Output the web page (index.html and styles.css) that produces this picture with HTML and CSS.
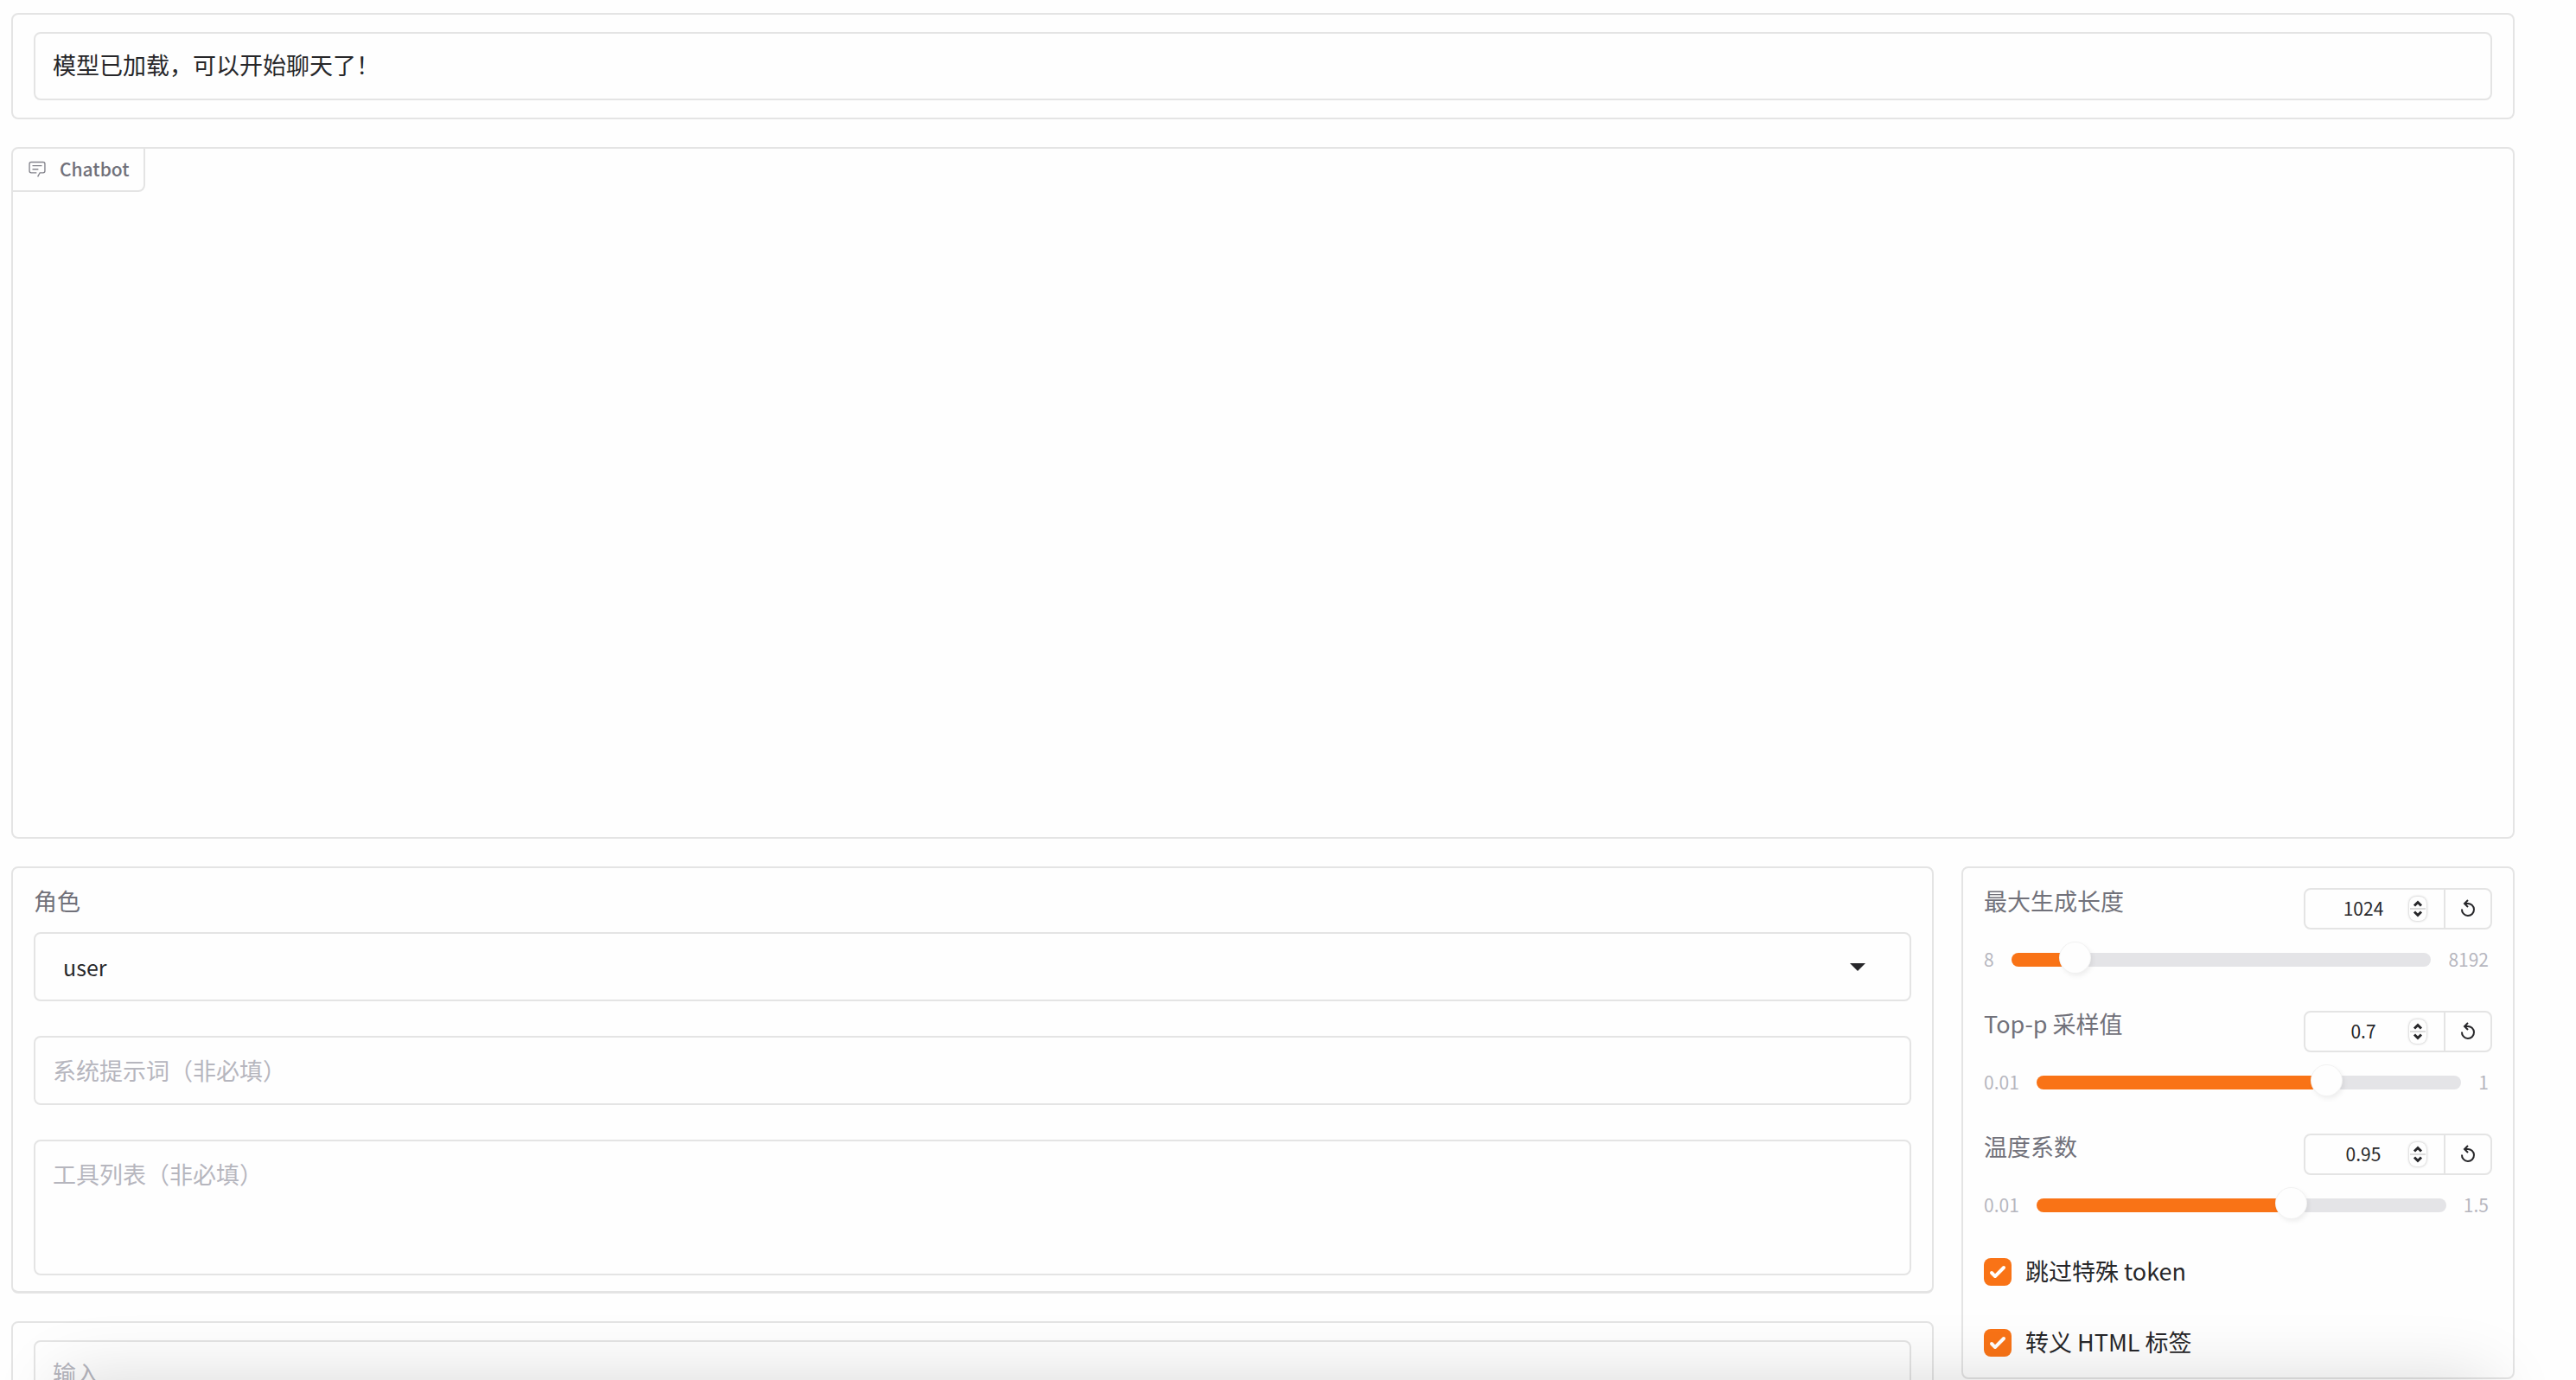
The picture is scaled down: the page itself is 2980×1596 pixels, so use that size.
FILE: index.html
```html
<!DOCTYPE html>
<html lang="zh-CN">

<head>
  <meta charset="UTF-8">
  <meta name="viewport" content="width=device-width, initial-scale=1.0">
  <title>Chatbot</title>
  <link rel="stylesheet" href="styles.css">
</head>

<body>
  <svg class="symbols" aria-hidden="true">
    <symbol id="icon-spinner" viewBox="0 0 20 28">
      <path class="split" d="M1 14h18" />
      <path d="M6 10.500 10 6.500l4 4M6 17.500l4 4 4-4" />
    </symbol>
    <symbol id="icon-reset" viewBox="0 0 18 22">
      <path d="M2 12.500A7 7 0 1 0 8.500 6H5" />
      <path d="M9 2 5 6l4 4" />
    </symbol>
  </svg>

  <main class="app">
    <section class="block">
      <input class="text-box" type="text" aria-label="状态" value="模型已加载，可以开始聊天了！" readonly>
    </section>

    <section class="block chatbot">
      <h2 class="block-label">
        <svg class="chat-icon" viewBox="0 0 32 32" aria-hidden="true">
          <path d="M17.74 30 16 29l4-7h6a2 2 0 0 0 2-2V8a2 2 0 0 0-2-2H6a2 2 0 0 0-2 2v12a2 2 0 0 0 2 2h9v2H6a4 4 0 0 1-4-4V8a4 4 0 0 1 4-4h20a4 4 0 0 1 4 4v12a4 4 0 0 1-4 4h-4.84Z" />
          <path d="M8 10h16v2H8zM8 16h10v2H8z" />
        </svg>
        Chatbot
      </h2>
    </section>

    <div class="row">
      <div class="main-column">
        <section class="block form">
          <div class="field">
            <label class="field-label" for="role">角色</label>
            <div class="select-wrap">
              <select id="role" class="text-box">
                <option>user</option>
                <option>observation</option>
              </select>
              <svg class="caret" viewBox="0 0 18 10" aria-hidden="true">
                <path d="M0 1h18L9 10z" />
              </svg>
            </div>
          </div>
          <input class="text-box" type="text" aria-label="系统提示词" placeholder="系统提示词（非必填）">
          <textarea class="text-box tools" aria-label="工具列表" placeholder="工具列表（非必填）"></textarea>
        </section>
        <section class="block">
          <textarea class="text-box" aria-label="输入" placeholder="输入"></textarea>
        </section>
      </div>

      <section class="block settings">
        <div class="slider">
          <div class="slider-head">
            <label class="field-label" for="max-length">最大生成长度</label>
            <div class="number-group">
              <input type="number" aria-label="最大生成长度数值" value="1024">
              <svg class="spinner" aria-hidden="true"><use href="#icon-spinner" /></svg>
              <button type="button" aria-label="重置"><svg aria-hidden="true"><use href="#icon-reset" /></svg></button>
            </div>
          </div>
          <div class="slider-body">
            <span>8</span>
            <input id="max-length" type="range" min="8" max="8192" value="1024" style="--fill: 12.4%">
            <span>8192</span>
          </div>
        </div>

        <div class="slider">
          <div class="slider-head">
            <label class="field-label" for="top-p">Top-p 采样值</label>
            <div class="number-group">
              <input type="number" aria-label="Top-p 采样值数值" step="0.01" value="0.7">
              <svg class="spinner" aria-hidden="true"><use href="#icon-spinner" /></svg>
              <button type="button" aria-label="重置"><svg aria-hidden="true"><use href="#icon-reset" /></svg></button>
            </div>
          </div>
          <div class="slider-body">
            <span>0.01</span>
            <input id="top-p" type="range" min="0.01" max="1" step="0.01" value="0.7" style="--fill: 69.7%">
            <span>1</span>
          </div>
        </div>

        <div class="slider">
          <div class="slider-head">
            <label class="field-label" for="temperature">温度系数</label>
            <div class="number-group">
              <input type="number" aria-label="温度系数数值" step="0.01" value="0.95">
              <svg class="spinner" aria-hidden="true"><use href="#icon-spinner" /></svg>
              <button type="button" aria-label="重置"><svg aria-hidden="true"><use href="#icon-reset" /></svg></button>
            </div>
          </div>
          <div class="slider-body">
            <span>0.01</span>
            <input id="temperature" type="range" min="0.01" max="1.5" step="0.01" value="0.95" style="--fill: 63.1%">
            <span>1.5</span>
          </div>
        </div>

        <label class="check"><input type="checkbox" checked><span>跳过特殊 token</span></label>
        <label class="check"><input type="checkbox" checked><span>转义 HTML 标签</span></label>
      </section>
    </div>
  </main>
  <div class="bottom-shade"></div>
</body>

</html>
```
FILE: styles.css
```css
* {
  box-sizing: border-box;
}

html,
body {
  height: 100%;
}

body {
  margin: 0;
  overflow: hidden;
  background: #fefefe;
  color: #27272a;
  font-family: "Noto Sans CJK SC", sans-serif;
  font-size: 27px;
  line-height: 40px;
}

input,
select,
textarea,
button {
  margin: 0;
  font: inherit;
  color: inherit;
}

.symbols {
  display: none;
}

.app {
  display: flex;
  flex-direction: column;
  gap: 32px;
  padding: 15px 71px 0 13px;
}

.block {
  border: 2px solid #e4e4e4;
  border-radius: 8px;
  padding: 20px 24px;
}

.text-box {
  display: block;
  width: 100%;
  height: 79px;
  padding: 16px 20px 20px;
  border: 2px solid #e4e4e4;
  border-radius: 8px;
  background: transparent;
  outline: none;
  resize: none;
}

.text-box::placeholder {
  color: #b6b6be;
}

/* chatbot */
.chatbot {
  height: 800px;
  padding: 0;
}

.block-label {
  display: flex;
  align-items: center;
  gap: 15px;
  width: fit-content;
  height: 50px;
  margin: 0;
  padding: 0 16px 2px 17px;
  border: solid #e4e4e4;
  border-width: 0 2px 2px 0;
  border-radius: 0 0 8px 0;
  color: #71717a;
  font-size: 21px;
  font-weight: 500;
}

.chat-icon {
  width: 22px;
  height: 22px;
  fill: #85858d;
}

/* form */
.row {
  display: flex;
  align-items: flex-start;
  gap: 32px;
}

.main-column {
  flex: 1;
  display: flex;
  flex-direction: column;
  gap: 32px;
}

.form {
  display: flex;
  flex-direction: column;
  gap: 40px;
  padding-top: 18px;
  padding-bottom: 18px;
  border-bottom-width: 3px;
}

.form .text-box {
  height: 80px;
  padding-top: 18px;
}

.form .tools {
  height: 157px;
}

.field-label {
  color: #71717a;
}

.field .field-label {
  display: block;
  margin-bottom: 16px;
}

.select-wrap {
  display: grid;
  align-items: center;
}

.select-wrap > * {
  grid-area: 1 / 1;
}

.select-wrap select {
  appearance: none;
  padding-left: 32px;
  font-size: 25px;
}

.caret {
  justify-self: end;
  width: 18px;
  height: 10px;
  margin-right: 53px;
  fill: #27272a;
  pointer-events: none;
}

/* settings */
.settings {
  flex: 0 0 640px;
  display: flex;
  flex-direction: column;
  gap: 36px;
  padding-top: 18px;
  padding-bottom: 17px;
}

.slider-head {
  display: flex;
  justify-content: space-between;
  align-items: flex-start;
}

.number-group {
  display: flex;
  align-items: center;
  width: 218px;
  height: 48px;
  margin-top: 5px;
  border: 2px solid #e4e4e4;
  border-radius: 8px;
  font-size: 21px;
}

.number-group input {
  flex: 1;
  min-width: 0;
  height: 44px;
  padding: 0 0 2px 14px;
  border: 0;
  background: transparent;
  outline: none;
  text-align: center;
  appearance: textfield;
}

.number-group input::-webkit-inner-spin-button {
  display: none;
}

.spinner {
  width: 20px;
  height: 28px;
  margin-right: 20px;
  border-radius: 8px;
  box-shadow: 0 0 3px rgba(0, 0, 0, 0.3);
  fill: none;
  stroke: #27272a;
  stroke-width: 3;
}

.split {
  stroke: #dcdcdc;
  stroke-width: 2;
}

.number-group button {
  display: flex;
  align-items: center;
  justify-content: center;
  width: 54px;
  height: 44px;
  padding: 0 0 2px;
  border: 0;
  border-left: 2px solid #e4e4e4;
  background: transparent;
  cursor: pointer;
}

.number-group button svg {
  width: 18px;
  height: 22px;
  fill: none;
  stroke: #27272a;
  stroke-width: 2;
}

.slider-body {
  display: flex;
  align-items: center;
  gap: 20px;
  height: 36px;
  margin-top: 17px;
  padding-right: 4px;
  color: #b6b6be;
  font-size: 21px;
}

.slider-body span {
  padding-bottom: 2px;
}

.slider-body input {
  flex: 1;
  min-width: 0;
  height: 16px;
  border-radius: 8px;
  appearance: none;
  background: linear-gradient(#f97316, #f97316) 0 0 / var(--fill) 100% no-repeat #e4e4e7;
}

.slider-body input::-webkit-slider-runnable-track {
  height: 16px;
}

.slider-body input::-webkit-slider-thumb {
  width: 35px;
  height: 35px;
  margin-top: -12px;
  border-radius: 50%;
  appearance: none;
  background: #fefefe;
  box-shadow: 0 0 0 1px #f2f2f2, 2px 3px 6px rgba(0, 0, 0, 0.08);
}

.check {
  display: flex;
  align-items: center;
  gap: 16px;
  height: 46px;
  cursor: pointer;
}

.check span {
  padding-bottom: 2px;
}

.check input {
  width: 32px;
  height: 32px;
  border-radius: 8px;
  appearance: none;
  background: #f97316 url("data:image/svg+xml,%3Csvg viewBox='0 0 16 16' fill='white' xmlns='http://www.w3.org/2000/svg'%3E%3Cpath d='M12.207 4.793a1 1 0 010 1.414l-5 5a1 1 0 01-1.414 0l-2-2a1 1 0 011.414-1.414L6.5 9.086l4.293-4.293a1 1 0 011.414 0z'/%3E%3C/svg%3E") center / 100%;
}

/* soft shade rising from the bottom edge of the window */
.bottom-shade {
  position: fixed;
  left: 70px;
  right: 100px;
  bottom: -200px;
  height: 200px;
  box-shadow: 0 0 80px rgba(0, 0, 0, 0.15);
  pointer-events: none;
}
```
